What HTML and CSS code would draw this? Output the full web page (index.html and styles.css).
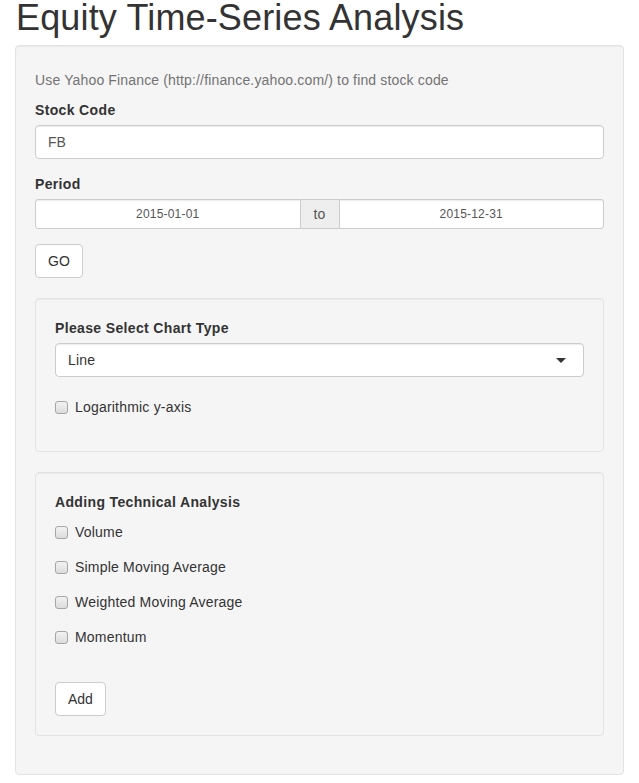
FILE: index.html
```html
<!DOCTYPE html>
<html>
<head>
<meta charset="utf-8">
<link rel="stylesheet" href="styles.css">
</head>
<body>
<div class="container">
  <h1 class="title">Equity Time-Series Analysis</h1>
  <div class="well outer">
    <span class="help-block">Use Yahoo Finance (http://finance.yahoo.com/) to find stock code</span>
    <div class="form-group">
      <label class="control-label">Stock Code</label>
      <input class="form-control" type="text" value="FB">
    </div>
    <div class="form-group">
      <label class="control-label">Period</label>
      <div class="daterange">
        <input class="date-input" type="text" value="2015-01-01">
        <span class="addon">to</span>
        <input class="date-input" type="text" value="2015-12-31">
      </div>
    </div>
    <button class="btn">GO</button>
    <div class="well inner first">
      <div class="form-group">
        <label class="control-label">Please Select Chart Type</label>
        <div class="select">
          <span>Line</span>
          <span class="caret"></span>
        </div>
      </div>
      <div class="checkbox single"><label><input type="checkbox"><span>Logarithmic y-axis</span></label></div>
    </div>
    <div class="well inner">
      <label class="control-label">Adding Technical Analysis</label>
      <div class="options">
        <div class="checkbox"><label><input type="checkbox"><span>Volume</span></label></div>
        <div class="checkbox"><label><input type="checkbox"><span>Simple Moving Average</span></label></div>
        <div class="checkbox"><label><input type="checkbox"><span>Weighted Moving Average</span></label></div>
        <div class="checkbox"><label><input type="checkbox"><span>Momentum</span></label></div>
      </div>
      <button class="btn add">Add</button>
    </div>
  </div>
</div>
</body>
</html>
```

FILE: styles.css
```css
* { box-sizing: border-box; }
html, body { margin: 0; padding: 0; background: #fff; }
body {
  font-family: "Liberation Sans", Arial, Helvetica, sans-serif;
  font-size: 14px;
  line-height: 20px;
  color: #333;
  letter-spacing: 0.2px;
}
.container { padding: 0 15px; }
.title {
  font-size: 36px;
  font-weight: 400;
  line-height: 36px;
  margin: 0 0 9px 1px;
  color: #333;
  letter-spacing: 0.15px;
}
.well {
  background: #f5f5f5;
  border: 1px solid #e3e3e3;
  border-radius: 4px;
  box-shadow: inset 0 1px 1px rgba(0,0,0,.05);
  padding: 19px;
}
.outer { width: 609px; height: 730px; }
.help-block {
  display: block;
  color: #737373;
  margin: 5px 0 10px;
  letter-spacing: 0.15px;
}
.form-group { margin-bottom: 15px; }
.control-label {
  display: block;
  font-weight: 700;
  margin-bottom: 5px;
  letter-spacing: 0.35px;
}
.form-control {
  display: block;
  width: 100%;
  height: 34px;
  padding: 6px 12px;
  font: inherit;
  color: #555;
  background: #fff;
  border: 1px solid #ccc;
  border-radius: 4px;
  box-shadow: inset 0 1px 1px rgba(0,0,0,.075);
}
.daterange { display: flex; height: 30px; }
.date-input {
  flex: 1;
  min-width: 0;
  height: 30px;
  font-family: inherit;
  font-size: 12px;
  letter-spacing: 0.2px;
  color: #555;
  text-align: center;
  background: #fff;
  border: 1px solid #ccc;
  box-shadow: inset 0 1px 1px rgba(0,0,0,.075);
  padding: 5px 10px;
}
.date-input:first-child { border-radius: 3px 0 0 3px; }
.date-input:last-child { border-radius: 0 3px 3px 0; }
.addon {
  flex: none;
  width: 38px;
  background: #eee;
  border: 1px solid #ccc;
  border-left: 0;
  border-right: 0;
  text-align: center;
  line-height: 28px;
  color: #555;
  font-size: 14px;
}
.btn {
  display: block;
  height: 34px;
  padding: 6px 12px;
  font: inherit;
  color: #333;
  background: #fff;
  border: 1px solid #ccc;
  border-radius: 4px;
}
.inner { margin-top: 20px; }
.first { height: 154px; }
.select {
  display: flex;
  justify-content: space-between;
  align-items: center;
  height: 34px;
  padding: 6px 17px 6px 12px;
  background: #fff;
  border: 1px solid #ccc;
  border-radius: 4px;
  color: #333;
  box-shadow: inset 0 1px 1px rgba(0,0,0,.075);
}
.caret {
  width: 0; height: 0;
  border-left: 5px solid transparent;
  border-right: 5px solid transparent;
  border-top: 5px solid #333;
}
.checkbox label {
  display: flex;
  align-items: center;
  min-height: 20px;
  color: #333;
}
.checkbox.single { margin-top: 20px; }
.checkbox input {
  -webkit-appearance: none;
  appearance: none;
  flex: none;
  width: 13px;
  height: 13px;
  margin: 0 7px 0 0;
  border: 1px solid #a6a6a6;
  border-radius: 3px;
  background: linear-gradient(#f2f2f2, #dcdcdc);
}
.options { padding-top: 5px; }
.options .checkbox { margin-bottom: 15px; }
.add { margin-top: 35px; }
```
